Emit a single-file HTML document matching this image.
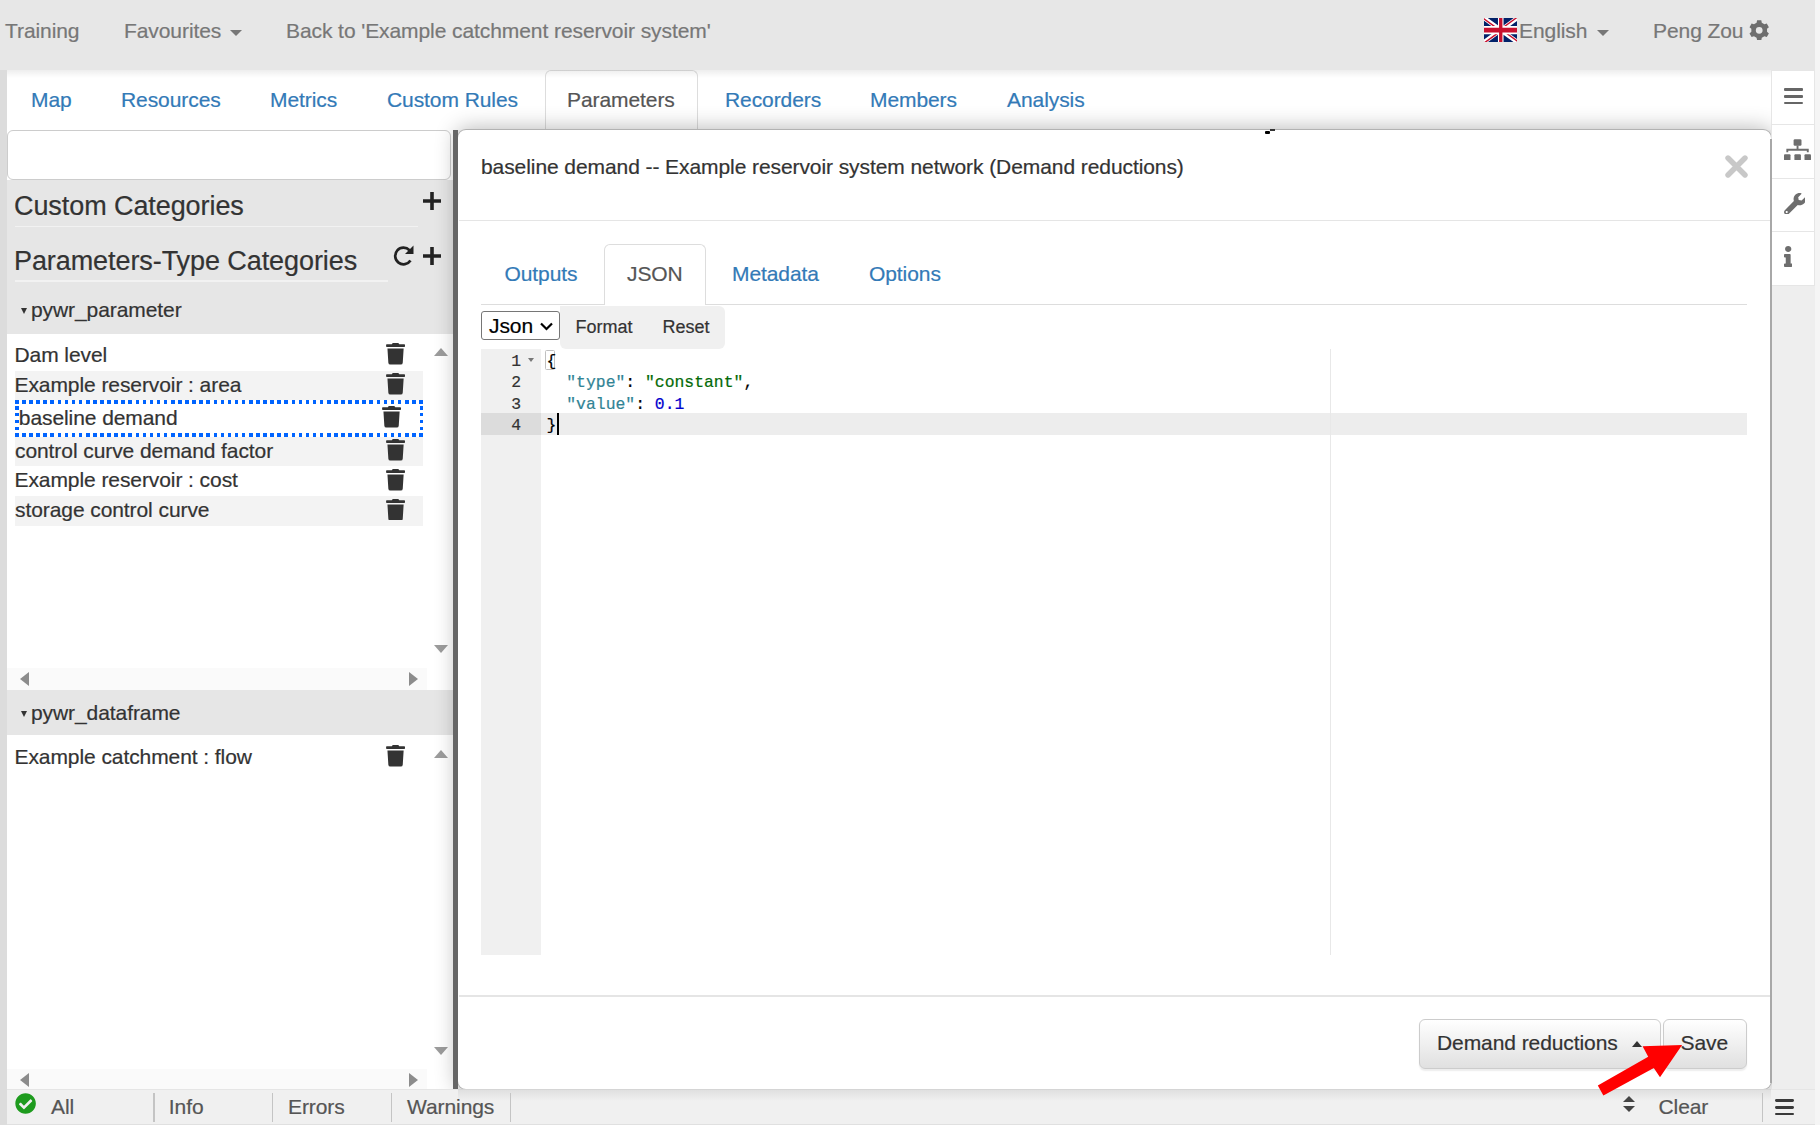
<!DOCTYPE html>
<html><head><meta charset="utf-8">
<style>
*{box-sizing:border-box;margin:0;padding:0}
html,body{width:1820px;height:1125px;overflow:hidden;background:#f7f7f7}
body{position:relative;font-family:"Liberation Sans",sans-serif;font-size:21px;color:#333;-webkit-text-stroke:0.2px currentColor}
.a{position:absolute}
.t{position:absolute;white-space:pre;line-height:21px;font-size:21px;letter-spacing:-0.08px}
.t27{position:absolute;white-space:pre;line-height:27px;font-size:27px;letter-spacing:-0.08px}
.t18{position:absolute;white-space:pre;line-height:18px;font-size:18px}
.mono{position:absolute;white-space:pre;line-height:16.4px;font-size:16.4px;font-family:"Liberation Mono",monospace;color:#000}
</style></head><body>
<div class="a" style="left:0;top:0;width:1815px;height:70px;background:#e7e7e7"></div>
<div class="t" style="left:5px;top:20px;color:#777">Training</div>
<div class="t" style="left:124px;top:20px;color:#777">Favourites</div>
<div class="a" style="left:230px;top:29.5px;width:0;height:0;border-left:6.0px solid transparent;border-right:6.0px solid transparent;border-top:6px solid #777"></div>
<div class="t" style="left:286px;top:20px;color:#777">Back to 'Example catchment reservoir system'</div>
<div class="t" style="left:1519px;top:20px;color:#777">English</div>
<div class="a" style="left:1597px;top:29.5px;width:0;height:0;border-left:6.0px solid transparent;border-right:6.0px solid transparent;border-top:6px solid #777"></div>
<div class="t" style="left:1653px;top:20px;color:#777">Peng Zou</div>
<svg class="a" style="left:1483.5px;top:17.5px" width="33.5" height="24.2" viewBox="0 0 60 30" preserveAspectRatio="none"><clipPath id="fs"><path d="M0,0 v30 h60 v-30 z"/></clipPath><clipPath id="ft"><path d="M30,15 h30 v15 z v15 h-30 z h-30 v-15 z v-15 h30 z"/></clipPath><g clip-path="url(#fs)"><path d="M0,0 v30 h60 v-30 z" fill="#012169"/><path d="M0,0 L60,30 M60,0 L0,30" stroke="#fff" stroke-width="6"/><path d="M0,0 L60,30 M60,0 L0,30" clip-path="url(#ft)" stroke="#C8102E" stroke-width="4"/><path d="M30,0 v30 M0,15 h60" stroke="#fff" stroke-width="10"/><path d="M30,0 v30 M0,15 h60" stroke="#C8102E" stroke-width="6"/></g></svg>
<svg class="a" style="left:1749px;top:19.5px" width="20.4" height="20.6" viewBox="0 0 20.4 20.6"><path fill="#6e6e6e" fill-rule="evenodd" d="M7.60 2.74 L8.08 0.32 L12.32 0.32 L12.80 2.74 L15.45 4.26 L17.78 3.47 L19.90 7.15 L18.05 8.77 L18.05 11.83 L19.90 13.45 L17.78 17.13 L15.45 16.34 L12.80 17.86 L12.32 20.28 L8.08 20.28 L7.60 17.86 L4.95 16.34 L2.62 17.13 L0.50 13.45 L2.35 11.83 L2.35 8.77 L0.50 7.15 L2.62 3.47 L4.95 4.26 Z M13.60 10.30 A3.4 3.4 0 1 0 6.80 10.30 A3.4 3.4 0 1 0 13.60 10.30 Z"/></svg>
<div class="a" style="left:0;top:70px;width:7px;height:1055px;background:#dcdcdc"></div>
<div class="a" style="left:7px;top:70px;width:1765px;height:60px;background:#fff"></div>
<div class="t" style="left:31px;top:88.8px;color:#337ab7">Map</div>
<div class="t" style="left:121px;top:88.8px;color:#337ab7">Resources</div>
<div class="t" style="left:270px;top:88.8px;color:#337ab7">Metrics</div>
<div class="t" style="left:387px;top:88.8px;color:#337ab7">Custom Rules</div>
<div class="t" style="left:725px;top:88.8px;color:#337ab7">Recorders</div>
<div class="t" style="left:870px;top:88.8px;color:#337ab7">Members</div>
<div class="t" style="left:1007px;top:88.8px;color:#337ab7">Analysis</div>
<div class="a" style="left:544.5px;top:70px;width:153px;height:62px;border:1.5px solid #ddd;border-bottom:none;border-radius:6px 6px 0 0;background:#fff"></div>
<div class="t" style="left:567px;top:88.8px;color:#555">Parameters</div>
<div class="a" style="left:7px;top:70px;width:1765px;height:8px;background:linear-gradient(rgba(0,0,0,.065),rgba(0,0,0,0))"></div>
<div class="a" style="left:7px;top:130px;width:446px;height:959px;background:#fff"></div>
<div class="a" style="left:7px;top:130px;width:444px;height:50px;border:1.5px solid #ccc;border-radius:6px;background:#fff"></div>
<div class="a" style="left:7px;top:180px;width:446px;height:153.5px;background:#e6e6e6"></div>
<div class="a" style="left:15px;top:225.5px;width:403px;height:1.5px;background:#f2f2f2"></div>
<div class="a" style="left:15px;top:280px;width:373px;height:1.5px;background:#f2f2f2"></div>
<svg class="a" style="left:422px;top:191px" width="20" height="20" viewBox="0 0 20 20"><path d="M10 1v18M1 10h18" stroke="#222" stroke-width="3.6"/></svg>
<svg class="a" style="left:422px;top:246px" width="20" height="20" viewBox="0 0 20 20"><path d="M10 1v18M1 10h18" stroke="#222" stroke-width="3.6"/></svg>
<svg class="a" style="left:392px;top:244px" width="24" height="23" viewBox="0 0 24 23"><path d="M17.5 6.2A8.3 8.3 0 1 0 18.5 16.5" fill="none" stroke="#222" stroke-width="2.7"/><path d="M21.5 1.5v8.5h-8.5z" fill="#222"/></svg>
<div class="t27" style="left:14px;top:192.9px">Custom Categories</div>
<div class="t27" style="left:14px;top:247.6px">Parameters-Type Categories</div>
<div class="a" style="left:21px;top:307.6px;width:0;height:0;border-left:3.8px solid transparent;border-right:3.8px solid transparent;border-top:6.6px solid #333"></div>
<div class="t" style="left:31px;top:298.6px">pywr_parameter</div>
<div class="a" style="left:15px;top:370.5px;width:408px;height:29.7px;background:#f3f3f3"></div>
<div class="a" style="left:15px;top:436.8px;width:408px;height:29.6px;background:#f3f3f3"></div>
<div class="a" style="left:15px;top:496.2px;width:408px;height:29.5px;background:#f3f3f3"></div>
<div class="t" style="left:14.5px;top:344.4px">Dam level</div>
<div class="t" style="left:14.5px;top:373.9px">Example reservoir : area</div>
<div class="t" style="left:18.8px;top:406.6px">baseline demand</div>
<div class="t" style="left:15px;top:440px">control curve demand factor</div>
<div class="t" style="left:14.5px;top:469.3px">Example reservoir : cost</div>
<div class="t" style="left:15px;top:498.7px">storage control curve</div>
<div class="t" style="left:14.5px;top:745.5px">Example catchment : flow</div>
<div class="a" style="left:15.2px;top:400.2px;width:408px;height:3.6px;background:repeating-linear-gradient(90deg,#0064ff 0 3.6px,transparent 3.6px 7.09px)"></div>
<div class="a" style="left:15.2px;top:433.4px;width:408px;height:3.6px;background:repeating-linear-gradient(90deg,#0064ff 0 3.6px,transparent 3.6px 7.09px)"></div>
<div class="a" style="left:15.2px;top:406.4px;width:3.6px;height:24.5px;background:repeating-linear-gradient(180deg,#0064ff 0 3.5px,transparent 3.5px 7px)"></div>
<div class="a" style="left:419.5px;top:406.4px;width:3.6px;height:24.5px;background:repeating-linear-gradient(180deg,#0064ff 0 3.5px,transparent 3.5px 7px)"></div>
<svg class="a" style="left:385.8px;top:343.3px" width="19.1" height="21.6" viewBox="0 0 448 512"><path fill="#333" d="M432 32H312l-9.4-18.7A24 24 0 0 0 281.1 0H166.8a23.72 23.72 0 0 0-21.4 13.3L136 32H16A16 16 0 0 0 0 48v32a16 16 0 0 0 16 16h416a16 16 0 0 0 16-16V48a16 16 0 0 0-16-16zM53.2 467a48 48 0 0 0 47.9 45h245.8a48 48 0 0 0 47.9-45L416 128H32z"/></svg>
<svg class="a" style="left:385.8px;top:373.1px" width="19.1" height="21.6" viewBox="0 0 448 512"><path fill="#333" d="M432 32H312l-9.4-18.7A24 24 0 0 0 281.1 0H166.8a23.72 23.72 0 0 0-21.4 13.3L136 32H16A16 16 0 0 0 0 48v32a16 16 0 0 0 16 16h416a16 16 0 0 0 16-16V48a16 16 0 0 0-16-16zM53.2 467a48 48 0 0 0 47.9 45h245.8a48 48 0 0 0 47.9-45L416 128H32z"/></svg>
<svg class="a" style="left:382.2px;top:406.4px" width="19.1" height="21.6" viewBox="0 0 448 512"><path fill="#333" d="M432 32H312l-9.4-18.7A24 24 0 0 0 281.1 0H166.8a23.72 23.72 0 0 0-21.4 13.3L136 32H16A16 16 0 0 0 0 48v32a16 16 0 0 0 16 16h416a16 16 0 0 0 16-16V48a16 16 0 0 0-16-16zM53.2 467a48 48 0 0 0 47.9 45h245.8a48 48 0 0 0 47.9-45L416 128H32z"/></svg>
<svg class="a" style="left:385.8px;top:439.4px" width="19.1" height="21.6" viewBox="0 0 448 512"><path fill="#333" d="M432 32H312l-9.4-18.7A24 24 0 0 0 281.1 0H166.8a23.72 23.72 0 0 0-21.4 13.3L136 32H16A16 16 0 0 0 0 48v32a16 16 0 0 0 16 16h416a16 16 0 0 0 16-16V48a16 16 0 0 0-16-16zM53.2 467a48 48 0 0 0 47.9 45h245.8a48 48 0 0 0 47.9-45L416 128H32z"/></svg>
<svg class="a" style="left:385.8px;top:469px" width="19.1" height="21.6" viewBox="0 0 448 512"><path fill="#333" d="M432 32H312l-9.4-18.7A24 24 0 0 0 281.1 0H166.8a23.72 23.72 0 0 0-21.4 13.3L136 32H16A16 16 0 0 0 0 48v32a16 16 0 0 0 16 16h416a16 16 0 0 0 16-16V48a16 16 0 0 0-16-16zM53.2 467a48 48 0 0 0 47.9 45h245.8a48 48 0 0 0 47.9-45L416 128H32z"/></svg>
<svg class="a" style="left:385.8px;top:498.8px" width="19.1" height="21.6" viewBox="0 0 448 512"><path fill="#333" d="M432 32H312l-9.4-18.7A24 24 0 0 0 281.1 0H166.8a23.72 23.72 0 0 0-21.4 13.3L136 32H16A16 16 0 0 0 0 48v32a16 16 0 0 0 16 16h416a16 16 0 0 0 16-16V48a16 16 0 0 0-16-16zM53.2 467a48 48 0 0 0 47.9 45h245.8a48 48 0 0 0 47.9-45L416 128H32z"/></svg>
<svg class="a" style="left:385.8px;top:745px" width="19.1" height="21.6" viewBox="0 0 448 512"><path fill="#333" d="M432 32H312l-9.4-18.7A24 24 0 0 0 281.1 0H166.8a23.72 23.72 0 0 0-21.4 13.3L136 32H16A16 16 0 0 0 0 48v32a16 16 0 0 0 16 16h416a16 16 0 0 0 16-16V48a16 16 0 0 0-16-16zM53.2 467a48 48 0 0 0 47.9 45h245.8a48 48 0 0 0 47.9-45L416 128H32z"/></svg>
<div class="a" style="left:7px;top:667.5px;width:420px;height:22.8px;background:#fafafa"></div>
<div class="a" style="left:7px;top:1069px;width:420px;height:20px;background:#fafafa"></div>
<div class="a" style="left:7px;top:690.3px;width:446px;height:44.7px;background:#e6e6e6"></div>
<div class="a" style="left:21px;top:711.2px;width:0;height:0;border-left:3.8px solid transparent;border-right:3.8px solid transparent;border-top:6.6px solid #333"></div>
<div class="t" style="left:31px;top:701.8px">pywr_dataframe</div>
<div class="a" style="left:433.5px;top:348px;width:0;height:0;border-left:7.75px solid transparent;border-right:7.75px solid transparent;border-bottom:8.5px solid #9c9c9c"></div>
<div class="a" style="left:433.5px;top:645px;width:0;height:0;border-left:7.75px solid transparent;border-right:7.75px solid transparent;border-top:8px solid #9c9c9c"></div>
<div class="a" style="left:20px;top:672px;width:0;height:0;border-top:7.5px solid transparent;border-bottom:7.5px solid transparent;border-right:9px solid #8c8c8c"></div>
<div class="a" style="left:408.5px;top:672px;width:0;height:0;border-top:7.5px solid transparent;border-bottom:7.5px solid transparent;border-left:9px solid #8c8c8c"></div>
<div class="a" style="left:433.5px;top:749.5px;width:0;height:0;border-left:7.75px solid transparent;border-right:7.75px solid transparent;border-bottom:8.5px solid #9c9c9c"></div>
<div class="a" style="left:433.5px;top:1046.5px;width:0;height:0;border-left:7.75px solid transparent;border-right:7.75px solid transparent;border-top:8.5px solid #9c9c9c"></div>
<div class="a" style="left:20px;top:1073px;width:0;height:0;border-top:7.5px solid transparent;border-bottom:7.5px solid transparent;border-right:9px solid #8c8c8c"></div>
<div class="a" style="left:408.5px;top:1073px;width:0;height:0;border-top:7.5px solid transparent;border-bottom:7.5px solid transparent;border-left:9px solid #8c8c8c"></div>
<div class="a" style="left:457px;top:129px;width:1314.5px;height:961px;background:#fff;border:1.5px solid rgba(0,0,0,.3);border-radius:9px;box-shadow:0 0 22px rgba(0,0,0,.3)"></div>
<div class="t" style="left:481px;top:156.4px">baseline demand -- Example reservoir system network (Demand reductions)</div>
<svg class="a" style="left:1725px;top:155px" width="23" height="23" viewBox="0 0 23 23"><path d="M3 3L20 20M20 3L3 20" stroke="#c8c8c8" stroke-width="5.4" stroke-linecap="round"/></svg>
<div class="a" style="left:458.5px;top:219.5px;width:1311px;height:1.5px;background:#e5e5e5"></div>
<div class="a" style="left:481px;top:303.5px;width:1266px;height:1.5px;background:#ddd"></div>
<div class="a" style="left:604px;top:243.5px;width:101.5px;height:61.5px;border:1.5px solid #ddd;border-bottom:none;border-radius:6px 6px 0 0;background:#fff"></div>
<div class="t" style="left:504.5px;top:263.4px;color:#337ab7">Outputs</div>
<div class="t" style="left:732px;top:263.4px;color:#337ab7">Metadata</div>
<div class="t" style="left:869px;top:263.4px;color:#337ab7">Options</div>
<div class="t" style="left:627px;top:263.4px;color:#555">JSON</div>
<div class="a" style="left:481px;top:311px;width:79px;height:29px;border:1.5px solid #767676;border-radius:3px;background:#fff"></div>
<div class="t" style="left:489px;top:314.6px;color:#000">Json</div>
<svg class="a" style="left:539px;top:321px" width="15" height="11" viewBox="0 0 15 11"><path d="M2 2.5L7.5 8L13 2.5" fill="none" stroke="#000" stroke-width="2.2"/></svg>
<div class="a" style="left:560px;top:306px;width:165px;height:42.6px;background:#f0f0f0;border-radius:0 6px 6px 6px"></div>
<div class="t18" style="left:575.5px;top:317.6px">Format</div>
<div class="t18" style="left:662.5px;top:317.6px">Reset</div>
<div class="a" style="left:481px;top:349.3px;width:59.6px;height:605.4px;background:#f0f0f0"></div>
<div class="a" style="left:481px;top:413.41px;width:59.6px;height:21.37px;background:#dcdcdc"></div>
<div class="a" style="left:540.6px;top:413.41px;width:1206.5px;height:21.37px;background:#ededed"></div>
<div class="a" style="left:1330.3px;top:349.3px;width:1.2px;height:605.4px;background:#e8e8e8"></div>
<div class="a" style="left:545.2px;top:349.6px;width:9.6px;height:20px;border:1.2px solid #c0c0c0;border-radius:1.5px"></div>
<div class="a" style="left:557.1px;top:413.41px;width:2.4px;height:21.37px;background:#000"></div>
<div class="mono" style="left:490px;top:353.8px;width:31px;text-align:right;color:#333">1</div>
<div class="mono" style="left:490px;top:375.17px;width:31px;text-align:right;color:#333">2</div>
<div class="mono" style="left:490px;top:396.54px;width:31px;text-align:right;color:#333">3</div>
<div class="mono" style="left:490px;top:417.91px;width:31px;text-align:right;color:#333">4</div>
<div class="a" style="left:527.5px;top:357.5px;width:0;height:0;border-left:3.75px solid transparent;border-right:3.75px solid transparent;border-top:4px solid #777"></div>
<div class="mono" style="left:546.6px;top:353.8px">{</div>
<div class="mono" style="left:546.6px;top:375.17px">  <span style="color:#318495">"type"</span>: <span style="color:#036a07">"constant"</span>,</div>
<div class="mono" style="left:546.6px;top:396.54px">  <span style="color:#318495">"value"</span>: <span style="color:#0000cd">0.1</span></div>
<div class="mono" style="left:546.6px;top:417.91px">}</div>
<div class="a" style="left:458.5px;top:995.3px;width:1311px;height:1.5px;background:#e5e5e5"></div>
<div class="a" style="left:1418.5px;top:1019px;width:242.5px;height:49.5px;border:1.5px solid #ccc;border-radius:6px;background:linear-gradient(#fff,#e0e0e0);box-shadow:0 1.5px 1.5px rgba(0,0,0,.075)"></div>
<div class="a" style="left:1662.5px;top:1019px;width:84.5px;height:49.5px;border:1.5px solid #ccc;border-radius:6px;background:linear-gradient(#fff,#e0e0e0);box-shadow:0 1.5px 1.5px rgba(0,0,0,.075)"></div>
<div class="t" style="left:1437px;top:1032px">Demand reductions</div>
<div class="a" style="left:1631.5px;top:1040.5px;width:0;height:0;border-left:5.5px solid transparent;border-right:5.5px solid transparent;border-bottom:6px solid #333"></div>
<div class="t" style="left:1680.5px;top:1031.5px">Save</div>
<div class="a" style="left:453px;top:130px;width:5px;height:959px;background:#666"></div>
<div class="a" style="left:7px;top:1089px;width:1808px;height:36px;background:#f0f0f0;border-top:1.5px solid #e5e5e5;border-bottom:1.5px solid #e0e0e0"></div>
<div class="a" style="left:458px;top:1089px;width:1313px;height:12px;background:linear-gradient(rgba(0,0,0,.075),rgba(0,0,0,0))"></div>
<svg class="a" style="left:14.8px;top:1093.3px" width="21.2" height="21.2" viewBox="0 0 512 512"><path fill="#1e9b1e" d="M504 256c0 136.967-111.033 248-248 248S8 392.967 8 256 119.033 8 256 8s248 111.033 248 248zM227.314 387.314l184-184c6.248-6.248 6.248-16.379 0-22.627l-22.627-22.627c-6.248-6.249-16.379-6.249-22.628 0L216 308.118l-70.059-70.059c-6.248-6.248-16.379-6.248-22.628 0l-22.627 22.627c-6.248 6.248-6.248 16.379 0 22.627l104 104c6.249 6.249 16.379 6.249 22.628.001z"/></svg>
<div class="t" style="left:51px;top:1096.3px;color:#555">All</div>
<div class="t" style="left:168.8px;top:1096.3px;color:#555">Info</div>
<div class="t" style="left:288px;top:1096.3px;color:#555">Errors</div>
<div class="t" style="left:407px;top:1096.3px;color:#555">Warnings</div>
<div class="a" style="left:153.1px;top:1093px;width:1.5px;height:29px;background:#c4c4c4"></div>
<div class="a" style="left:271.9px;top:1093px;width:1.5px;height:29px;background:#c4c4c4"></div>
<div class="a" style="left:390.8px;top:1093px;width:1.5px;height:29px;background:#c4c4c4"></div>
<div class="a" style="left:509.5px;top:1093px;width:1.5px;height:29px;background:#c4c4c4"></div>
<div class="a" style="left:1622.7px;top:1095.5px;width:0;height:0;border-left:6.1px solid transparent;border-right:6.1px solid transparent;border-bottom:6.3px solid #444"></div>
<div class="a" style="left:1622.7px;top:1105.5px;width:0;height:0;border-left:6.1px solid transparent;border-right:6.1px solid transparent;border-top:6.3px solid #444"></div>
<div class="t" style="left:1658.5px;top:1096px;color:#555">Clear</div>
<div class="a" style="left:1761.5px;top:1093px;width:1.5px;height:29px;background:#c4c4c4"></div>
<div class="a" style="left:1775px;top:1099.3px;width:19px;height:2.8px;background:#3a3a3a;border-radius:1.4px"></div>
<div class="a" style="left:1775px;top:1106px;width:19px;height:2.8px;background:#3a3a3a;border-radius:1.4px"></div>
<div class="a" style="left:1775px;top:1112.7px;width:19px;height:2.8px;background:#3a3a3a;border-radius:1.4px"></div>
<div class="a" style="left:1772px;top:70px;width:43px;height:1019px;background:#eee"></div>
<div class="a" style="left:1771px;top:70.3px;width:44px;height:55px;background:#fff;border:1.5px solid #e6e6e6"></div>
<div class="a" style="left:1771px;top:124px;width:44px;height:55px;background:#fff;border:1.5px solid #e6e6e6"></div>
<div class="a" style="left:1771px;top:177.5px;width:44px;height:55px;background:#fff;border:1.5px solid #e6e6e6"></div>
<div class="a" style="left:1771px;top:231px;width:44px;height:55px;background:#fff;border:1.5px solid #e6e6e6"></div>
<div class="a" style="left:1783.7px;top:88.4px;width:19px;height:2.8px;background:#666;border-radius:1px"></div>
<div class="a" style="left:1783.7px;top:95.1px;width:19px;height:2.8px;background:#666;border-radius:1px"></div>
<div class="a" style="left:1783.7px;top:101.7px;width:19px;height:2.8px;background:#666;border-radius:1px"></div>
<svg class="a" style="left:1783.5px;top:138.9px" width="27.2" height="21.6" viewBox="0 0 27.2 21.6"><g fill="#6e6e6e"><rect x="9.6" y="0.2" width="7.9" height="6.5" rx="1.3"/><rect x="0" y="15.2" width="6.5" height="6.2" rx="1"/><rect x="10.4" y="15.2" width="6.5" height="6.2" rx="1"/><rect x="20.5" y="15.2" width="6.5" height="6.2" rx="1"/></g><path d="M13.55 6.5V10.8M3.3 13.3V10.8H23.8V13.3" fill="none" stroke="#6e6e6e" stroke-width="1.9"/></svg>
<svg class="a" style="left:1783.5px;top:192.5px" width="21.8" height="21.8" viewBox="0 0 512 512"><path fill="#6e6e6e" d="M507.73 109.1c-2.24-9.03-13.54-12.09-20.12-5.51l-74.36 74.36-67.88-11.31-11.31-67.88 74.36-74.36c6.62-6.62 3.43-17.9-5.66-20.16-47.38-11.74-99.55.91-136.58 37.93-39.64 39.64-50.55 97.1-34.05 147.2L18.74 402.76c-24.99 24.99-24.99 65.51 0 90.5 24.99 24.99 65.51 24.99 90.5 0l213.21-213.21c50.12 16.71 107.47 5.68 147.37-34.22 37.07-37.07 49.7-89.32 37.91-136.73zM64 472c-13.25 0-24-10.75-24-24 0-13.26 10.75-24 24-24s24 10.74 24 24c0 13.25-10.75 24-24 24z"/></svg>
<svg class="a" style="left:1783.8px;top:246.3px" width="8.4" height="21" viewBox="0 0 192 512" preserveAspectRatio="none"><path fill="#6e6e6e" d="M20 424.229h20V279.771H20c-11.046 0-20-8.954-20-20V212c0-11.046 8.954-20 20-20h112c11.046 0 20 8.954 20 20v212.229h20c11.046 0 20 8.954 20 20V492c0 11.046-8.954 20-20 20H20c-11.046 0-20-8.954-20-20v-47.771c0-11.046 8.954-20 20-20zM96 0C56.235 0 24 32.235 24 72s32.235 72 72 72 72-32.235 72-72S135.764 0 96 0z"/></svg>
<div class="a" style="left:1815px;top:0;width:5px;height:1125px;background:#f5f5f5"></div>
<svg class="a" style="left:0;top:0" width="1820" height="1125"><path fill="#ff0000" d="M1682.1 1044.9L1642.6 1046.3L1648.2 1056.8L1597.8 1085.4L1603.4 1095.6L1653.8 1068L1660 1077.3Z"/></svg>
<div class="a" style="left:1265.2px;top:131.3px;width:5px;height:2.8px;background:#000;border-radius:1px"></div>
<div class="a" style="left:1270px;top:129.3px;width:5px;height:1.6px;background:#333"></div>
<div class="a" style="left:1770px;top:139px;width:2px;height:944px;background:#a8a8a8"></div>
</body></html>
